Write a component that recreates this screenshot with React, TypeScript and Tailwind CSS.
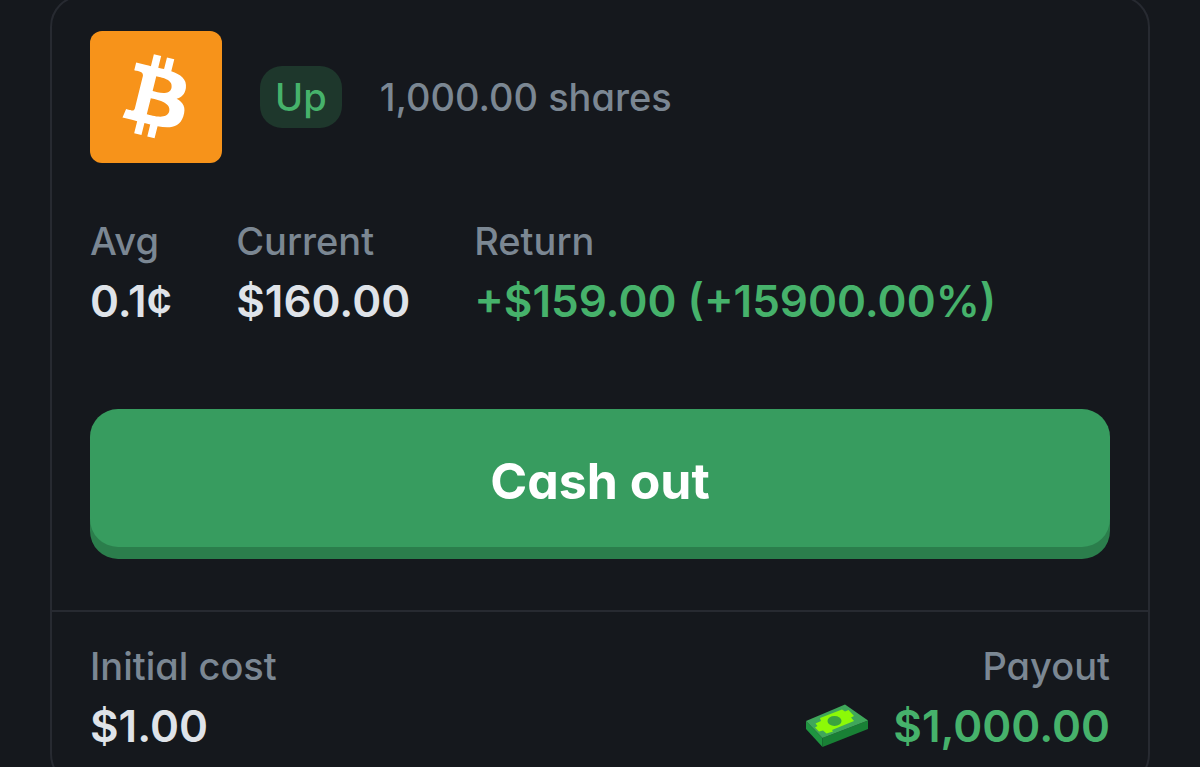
import type { ReactNode } from "react";

function BitcoinLogo() {
  return (
    <svg
      role="img"
      aria-label="Bitcoin"
      viewBox="0.45 0.5 31.3 31.3"
      className="size-33 shrink-0 rounded-xl bg-[#f7931a]"
    >
      <path
        fill="#fff"
        d="M23.189 14.02c.314-2.096-1.283-3.223-3.465-3.975l.708-2.84-1.728-.43-.69 2.765c-.454-.114-.92-.22-1.385-.326l.695-2.783L15.596 6l-.708 2.839c-.376-.086-.746-.17-1.104-.26l.002-.009-2.384-.595-.46 1.846s1.283.294 1.256.312c.7.175.826.638.805 1.006l-.806 3.235c.048.012.11.03.18.057l-.183-.045-1.13 4.532c-.086.212-.303.531-.793.41.018.025-1.256-.313-1.256-.313l-.858 1.978 2.25.561c.418.105.828.215 1.231.318l-.715 2.872 1.727.43.708-2.84c.472.127.93.245 1.378.357l-.706 2.828 1.728.43.715-2.866c2.948.558 5.164.333 6.097-2.333.752-2.146-.037-3.385-1.588-4.192 1.13-.26 1.98-1.003 2.207-2.538zm-3.95 5.538c-.533 2.147-4.148.986-5.32.695l.95-3.805c1.172.293 4.929.872 4.37 3.11zm.535-5.569c-.487 1.953-3.495.96-4.47.717l.86-3.45c.975.243 4.118.696 3.61 2.733z"
      />
    </svg>
  );
}

function CashIcon() {
  return (
    <svg aria-hidden="true" viewBox="0 0 64 44" className="h-11 w-16 shrink-0">
      <path fill="#1f9440" d="M1 17 17.500 34V43L1 25Z" />
      <path fill="#198035" d="M17.500 34 63 16.500V25L17.500 43Z" />
      <path fill="#3fa75a" d="M1 17 40 .5 63 16.500 17.500 34Z" />
      <path
        fill="#8cf907"
        d="M10.500 19.500 16 17 15 14 37 5.500 40 7.500 43.500 6 49 12 46 13.500 49 17 27 26 28 27.500 21.500 29.500 18 26.500 14 27.500 10 23.500 12.500 22Z"
      />
      <ellipse cx="29.500" cy="17" rx="7" ry="5" fill="#3aa33f" />
    </svg>
  );
}

function Stat({
  label,
  children,
  positive = false,
  alignEnd = false,
}: {
  label: string;
  children: ReactNode;
  positive?: boolean;
  alignEnd?: boolean;
}) {
  return (
    <div className={alignEnd ? "flex flex-col items-end" : "flex flex-col items-start"}>
      <dt className="text-[38px] leading-[60px] font-medium text-[#7b8793]">{label}</dt>
      <dd
        className={
          positive
            ? "flex items-center gap-6 text-[44px] leading-[60px] font-semibold text-[#46b26b]"
            : "text-[44px] leading-[60px] font-semibold text-[#dfe3e9]"
        }
      >
        {children}
      </dd>
    </div>
  );
}

export default function App() {
  return (
    <main className="h-screen overflow-hidden bg-[#15181d] px-[50px] font-['Inter',sans-serif] [font-feature-settings:'cv11']">
      <article className="-mt-[5px] rounded-[32px] border-2 border-[#272a31] whitespace-nowrap">
        <div className="px-[38px] pt-[34px] pb-[51px]">
          <header className="flex items-center gap-[38px]">
            <BitcoinLogo />
            <span className="rounded-[22px] bg-[#1e372c] px-[15px] text-[38px] leading-[62px] font-medium text-[#46b26b]">
              Up
            </span>
            <span className="text-[38px] leading-[62px] font-medium text-[#7b8793]">
              1,000.00 shares
            </span>
          </header>

          <dl className="mt-12 flex gap-16">
            <Stat label="Avg">0.1¢</Stat>
            <Stat label="Current">$160.00</Stat>
            <Stat label="Return" positive>
              +$159.00 (+15900.00%)
            </Stat>
          </dl>

          <button
            type="button"
            className="mt-[78px] mb-3 block h-[138px] w-full cursor-pointer rounded-[28px] bg-[#379c5f] pt-1.5 text-[50px] font-bold text-white shadow-[0_12px_0_#2b7e4c]"
          >
            Cash out
          </button>
        </div>

        <dl className="flex justify-between border-t-2 border-[#272a31] px-[38px] pt-6 pb-7">
          <Stat label="Initial cost">$1.00</Stat>
          <Stat label="Payout" positive alignEnd>
            <CashIcon />
            $1,000.00
          </Stat>
        </dl>
      </article>
    </main>
  );
}
